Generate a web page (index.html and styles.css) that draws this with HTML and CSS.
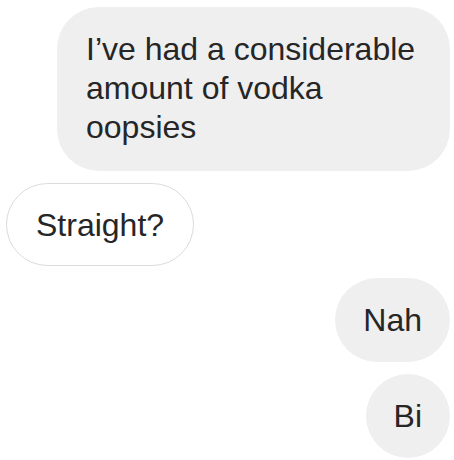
FILE: index.html
```html
<!DOCTYPE html>
<html lang="en">
<head>
  <meta charset="UTF-8">
  <meta name="viewport" content="width=device-width, initial-scale=1">
  <title>Chat</title>
  <link rel="stylesheet" href="styles.css">
</head>
<body>
  <div class="thread">
    <div class="msg sent">I’ve had a considerable amount of vodka oopsies</div>
    <div class="msg received">Straight?</div>
    <div class="msg sent">Nah</div>
    <div class="msg sent">Bi</div>
  </div>
</body>
</html>
```

FILE: styles.css
```css
*, *::before, *::after { box-sizing: border-box; }
body {
  margin: 0; background: #fff; color: #262626;
  font-family: "Liberation Sans", Arial, sans-serif;
  overflow: hidden;
}
.thread {
  display: flex; flex-direction: column; gap: 12px;
  padding: 7px 4px 0 6px;
}
.msg {
  font-size: 32px; line-height: 39px;
  padding: 23px 28px 22px; border-radius: 42px;
  max-width: 393px;
}
.msg:first-child { padding: 23px 29px 24px; }
.sent { align-self: flex-end; background: #efefef; }
.received {
  align-self: flex-start; background: #fff;
  border: 1px solid #dbdbdb; padding: 22px 29px 20px;
}
```
